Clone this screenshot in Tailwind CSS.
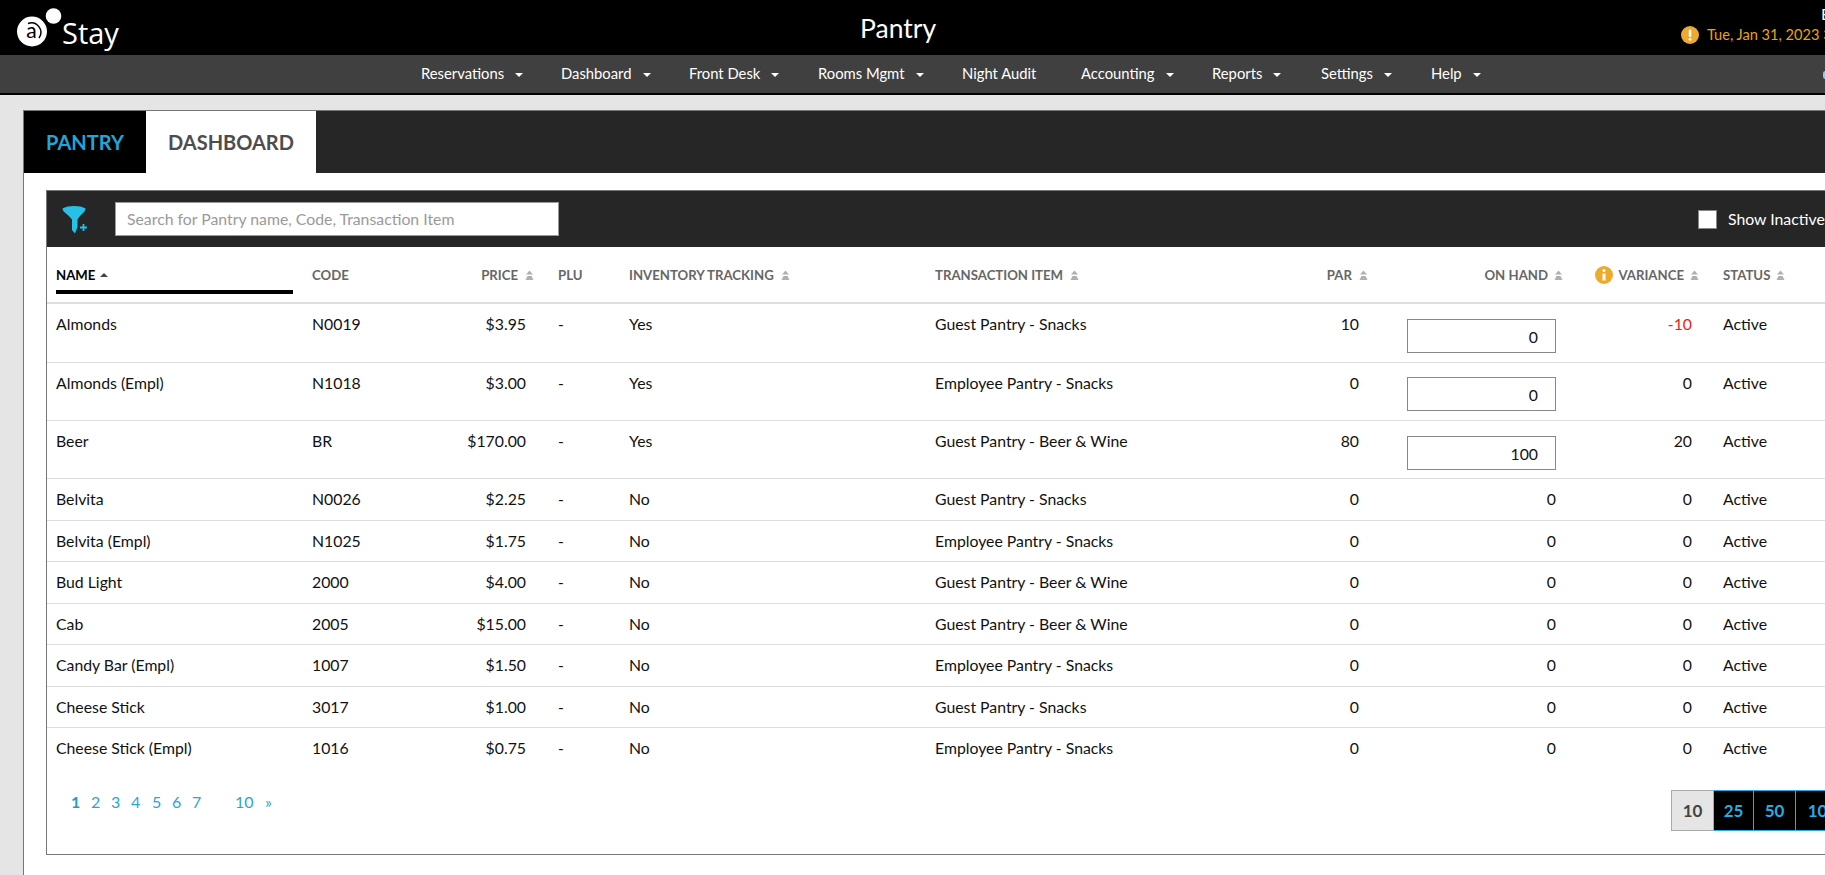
<!DOCTYPE html>
<html>
<head>
<meta charset="utf-8">
<script src="https://cdn.jsdelivr.net/npm/@tailwindcss/browser@4"></script>
</head>
<body class="w-[1825px] h-[875px] overflow-hidden bg-[#e5e5e5] font-['Lato','Noto_Sans',sans-serif] text-[15.8px] text-[#111]">
<header class="relative h-[55px] bg-black text-white flex items-start">
  <div class="flex items-start ml-[17px] mt-[5px]">
    <svg class="w-[46px] h-[45px]" viewBox="0 0 46 45">
      <circle cx="15" cy="26.500" r="15" fill="#fff"/>
      <path d="M11 18.500A9.500 9.500 0 0 1 22 33" fill="none" stroke="#000" stroke-width="1.500"/>
      <text x="14.500" y="33" text-anchor="middle" font-size="21" font-family="Lato" fill="#000">a</text>
      <circle cx="36.500" cy="11" r="7.800" fill="#fff"/>
    </svg>
    <span class="font-['Open_Sans'] text-[29px] leading-[34px] mt-[11px] -ml-[1px]">Stay</span>
  </div>
  <h1 class="absolute left-[860px] top-[9px] text-[26.5px] leading-[38px]">Pantry</h1>
  <div class="absolute left-[1681px] top-[4px] whitespace-nowrap">
    <div class="pl-[140px] text-[16px] leading-[20px]">E</div>
    <div class="flex items-center gap-[8px] text-[#eda30e] text-[14.6px] leading-[18px] mt-[2px]">
      <svg class="w-[18px] h-[18px]" viewBox="0 0 18 18"><circle cx="9" cy="9" r="9" fill="#eeaa2d"/><rect x="7.800" y="3.500" width="2.400" height="7.500" rx="1" fill="#fff"/><circle cx="9" cy="13.300" r="1.400" fill="#fff"/></svg>
      <span>Tue, Jan 31, 2023 3:00</span>
    </div>
  </div>
</header>
<nav class="relative h-[40px] bg-[#404040] border-b-2 border-black text-white text-[14.8px] flex items-center pl-[421px] pb-[2px]">
  <a class="w-[140px] flex items-center">Reservations<i class="ml-[11px] mt-[4px] border-x-[4px] border-t-[4px] border-x-transparent border-t-white"></i></a>
  <a class="w-[128px] flex items-center">Dashboard<i class="ml-[11px] mt-[4px] border-x-[4px] border-t-[4px] border-x-transparent border-t-white"></i></a>
  <a class="w-[129px] flex items-center">Front Desk<i class="ml-[11px] mt-[4px] border-x-[4px] border-t-[4px] border-x-transparent border-t-white"></i></a>
  <a class="w-[144px] flex items-center">Rooms Mgmt<i class="ml-[11px] mt-[4px] border-x-[4px] border-t-[4px] border-x-transparent border-t-white"></i></a>
  <a class="w-[119px] flex items-center">Night Audit</a>
  <a class="w-[131px] flex items-center">Accounting<i class="ml-[11px] mt-[4px] border-x-[4px] border-t-[4px] border-x-transparent border-t-white"></i></a>
  <a class="w-[109px] flex items-center">Reports<i class="ml-[11px] mt-[4px] border-x-[4px] border-t-[4px] border-x-transparent border-t-white"></i></a>
  <a class="w-[110px] flex items-center">Settings<i class="ml-[11px] mt-[4px] border-x-[4px] border-t-[4px] border-x-transparent border-t-white"></i></a>
  <a class="flex items-center">Help<i class="ml-[11px] mt-[4px] border-x-[4px] border-t-[4px] border-x-transparent border-t-white"></i></a>
  <span class="absolute left-[1823px] top-[16px] w-[5px] h-[8px] rounded-full bg-[#9cc3ee]"></span>
</nav>
<main class="ml-[23px] mt-[15px] w-[1900px] h-[800px] bg-white border border-[#777]">
  <div class="h-[62px] bg-[#262626] flex">
    <div class="w-[122px] bg-black text-[#1ea7d8] font-bold text-[20px] flex items-center justify-center">PANTRY</div>
    <div class="w-[170px] bg-white text-[#4d4d4d] font-bold text-[20px] flex items-center justify-center">DASHBOARD</div>
  </div>
  <section class="ml-[22px] mt-[17px] w-[1880px] h-[665px] border border-[#777] bg-white">
    <div class="h-[56px] bg-[#262626] flex items-center">
      <svg class="ml-[15px] w-[26px] h-[29px]" viewBox="0 0 26 29">
        <path d="M.5 3.500C6 .2 18 .2 23.500 3.500 24 6.500 17 11 15.500 14.500V22L13 28.500 10 25V14.500C8 11 0 6.500.5 3.500Z" fill="#29c0e8"/>
        <path d="M18 22.500h7M21.500 19v7" stroke="#29c0e8" stroke-width="1.800"/>
      </svg>
      <div class="ml-[27px] w-[444px] h-[34px] bg-white border border-[#999] flex items-center pl-[11px] text-[#9a9a9a] text-[15.8px]">Search for Pantry name, Code, Transaction Item</div>
      <div class="ml-[1139px] w-[19px] h-[19px] bg-white border border-[#888]"></div>
      <span class="ml-[11px] text-white text-[15.8px]">Show Inactive</span>
    </div>
    <table class="table-fixed border-collapse w-[1850px]">
      <colgroup>
        <col class="w-[256px]"><col class="w-[100px]"><col class="w-[146px]"><col class="w-[71px]"><col class="w-[306px]"><col class="w-[300px]"><col class="w-[160px]"><col class="w-[184px]"><col class="w-[144px]"><col>
      </colgroup>
      <thead>
        <tr class="h-[56px] border-b-2 border-[#ddd] text-[13.2px] font-bold text-[#666] align-top">
          <th class="pl-[9px] pt-[18px] text-left text-black font-bold">
            <span class="flex items-center gap-[5px] leading-[20px]">NAME<i class="border-x-[4px] border-b-[4px] border-x-transparent border-b-[#444]"></i></span>
            <span class="block w-[237px] h-[4px] bg-black mt-[5px]"></span>
          </th>
          <th class="pl-[9px] pt-[18px] text-left font-bold leading-[20px]">CODE</th>
          <th class="pr-[15px] pt-[18px] font-bold leading-[20px]"><span class="flex items-center justify-end gap-[7px]">PRICE<svg class="w-[9px] h-[10px]" viewBox="0 0 9 10"><path d="M4.500.5 8 4.500H1ZM2.500 6H6.500L8.500 10H.5Z" fill="#b0b0b0"/></svg></span></th>
          <th class="pl-[9px] pt-[18px] text-left font-bold leading-[20px]">PLU</th>
          <th class="pl-[9px] pt-[18px] font-bold leading-[20px]"><span class="flex items-center gap-[7px]">INVENTORY TRACKING<svg class="w-[9px] h-[10px]" viewBox="0 0 9 10"><path d="M4.500.5 8 4.500H1ZM2.500 6H6.500L8.500 10H.5Z" fill="#b0b0b0"/></svg></span></th>
          <th class="pl-[9px] pt-[18px] font-bold leading-[20px]"><span class="flex items-center gap-[7px]">TRANSACTION ITEM<svg class="w-[9px] h-[10px]" viewBox="0 0 9 10"><path d="M4.500.5 8 4.500H1ZM2.500 6H6.500L8.500 10H.5Z" fill="#b0b0b0"/></svg></span></th>
          <th class="pr-[18px] pt-[18px] font-bold leading-[20px]"><span class="flex items-center justify-end gap-[7px]">PAR<svg class="w-[9px] h-[10px]" viewBox="0 0 9 10"><path d="M4.500.5 8 4.500H1ZM2.500 6H6.500L8.500 10H.5Z" fill="#b0b0b0"/></svg></span></th>
          <th class="pr-[7px] pt-[18px] font-bold leading-[20px]"><span class="flex items-center justify-end gap-[6px]">ON HAND<svg class="w-[9px] h-[10px]" viewBox="0 0 9 10"><path d="M4.500.5 8 4.500H1ZM2.500 6H6.500L8.500 10H.5Z" fill="#b0b0b0"/></svg></span></th>
          <th class="pr-[15px] pt-[18px] font-bold leading-[20px]"><span class="flex items-center justify-end gap-[6px]"><svg class="w-[18px] h-[18px] mr-[-1px]" viewBox="0 0 18 18"><circle cx="9" cy="9" r="9" fill="#eeaa2d"/><circle cx="9" cy="4.500" r="1.500" fill="#fff"/><path d="M7.500 7.500H10.500V14.500H7.500Z" fill="#fff"/></svg>VARIANCE<svg class="w-[9px] h-[10px]" viewBox="0 0 9 10"><path d="M4.500.5 8 4.500H1ZM2.500 6H6.500L8.500 10H.5Z" fill="#b0b0b0"/></svg></span></th>
          <th class="pl-[9px] pt-[18px] font-bold leading-[20px]"><span class="flex items-center gap-[6px]">STATUS<svg class="w-[9px] h-[10px]" viewBox="0 0 9 10"><path d="M4.500.5 8 4.500H1ZM2.500 6H6.500L8.500 10H.5Z" fill="#b0b0b0"/></svg></span></th>
        </tr>
      </thead>
      <tbody class="align-top text-[15.8px] leading-[20px]">
        <tr class="h-[59px] border-b border-[#ddd]">
          <td class="pl-[9px] pt-[10px]">Almonds</td><td class="pl-[9px] pt-[10px]">N0019</td><td class="pr-[23px] pt-[10px] text-right">$3.95</td><td class="pl-[9px] pt-[10px]">-</td><td class="pl-[9px] pt-[10px]">Yes</td><td class="pl-[9px] pt-[10px]">Guest Pantry - Snacks</td><td class="pr-[27px] pt-[10px] text-right">10</td>
          <td class="pr-[14px] pt-[15px]"><div class="ml-auto w-[149px] h-[34px] border border-[#888] pr-[17px] text-right leading-[33px]">0</div></td>
          <td class="pr-[22px] pt-[10px] text-right text-[#f01818]">-10</td><td class="pl-[9px] pt-[10px]">Active</td>
        </tr>
        <tr class="h-[58px] border-b border-[#ddd]">
          <td class="pl-[9px] pt-[10px]">Almonds (Empl)</td><td class="pl-[9px] pt-[10px]">N1018</td><td class="pr-[23px] pt-[10px] text-right">$3.00</td><td class="pl-[9px] pt-[10px]">-</td><td class="pl-[9px] pt-[10px]">Yes</td><td class="pl-[9px] pt-[10px]">Employee Pantry - Snacks</td><td class="pr-[27px] pt-[10px] text-right">0</td>
          <td class="pr-[14px] pt-[14px]"><div class="ml-auto w-[149px] h-[34px] border border-[#888] pr-[17px] text-right leading-[33px]">0</div></td>
          <td class="pr-[22px] pt-[10px] text-right">0</td><td class="pl-[9px] pt-[10px]">Active</td>
        </tr>
        <tr class="h-[58px] border-b border-[#ddd]">
          <td class="pl-[9px] pt-[10px]">Beer</td><td class="pl-[9px] pt-[10px]">BR</td><td class="pr-[23px] pt-[10px] text-right">$170.00</td><td class="pl-[9px] pt-[10px]">-</td><td class="pl-[9px] pt-[10px]">Yes</td><td class="pl-[9px] pt-[10px]">Guest Pantry - Beer &amp; Wine</td><td class="pr-[27px] pt-[10px] text-right">80</td>
          <td class="pr-[14px] pt-[15px]"><div class="ml-auto w-[149px] h-[34px] border border-[#888] pr-[17px] text-right leading-[33px]">100</div></td>
          <td class="pr-[22px] pt-[10px] text-right">20</td><td class="pl-[9px] pt-[10px]">Active</td>
        </tr>
        <tr class="h-[42px] border-b border-[#ddd]">
          <td class="pl-[9px] pt-[10px]">Belvita</td><td class="pl-[9px] pt-[10px]">N0026</td><td class="pr-[23px] pt-[10px] text-right">$2.25</td><td class="pl-[9px] pt-[10px]">-</td><td class="pl-[9px] pt-[10px]">No</td><td class="pl-[9px] pt-[10px]">Guest Pantry - Snacks</td><td class="pr-[27px] pt-[10px] text-right">0</td><td class="pr-[14px] pt-[10px] text-right">0</td><td class="pr-[22px] pt-[10px] text-right">0</td><td class="pl-[9px] pt-[10px]">Active</td>
        </tr>
        <tr class="h-[41px] border-b border-[#ddd]">
          <td class="pl-[9px] pt-[10px]">Belvita (Empl)</td><td class="pl-[9px] pt-[10px]">N1025</td><td class="pr-[23px] pt-[10px] text-right">$1.75</td><td class="pl-[9px] pt-[10px]">-</td><td class="pl-[9px] pt-[10px]">No</td><td class="pl-[9px] pt-[10px]">Employee Pantry - Snacks</td><td class="pr-[27px] pt-[10px] text-right">0</td><td class="pr-[14px] pt-[10px] text-right">0</td><td class="pr-[22px] pt-[10px] text-right">0</td><td class="pl-[9px] pt-[10px]">Active</td>
        </tr>
        <tr class="h-[42px] border-b border-[#ddd]">
          <td class="pl-[9px] pt-[10px]">Bud Light</td><td class="pl-[9px] pt-[10px]">2000</td><td class="pr-[23px] pt-[10px] text-right">$4.00</td><td class="pl-[9px] pt-[10px]">-</td><td class="pl-[9px] pt-[10px]">No</td><td class="pl-[9px] pt-[10px]">Guest Pantry - Beer &amp; Wine</td><td class="pr-[27px] pt-[10px] text-right">0</td><td class="pr-[14px] pt-[10px] text-right">0</td><td class="pr-[22px] pt-[10px] text-right">0</td><td class="pl-[9px] pt-[10px]">Active</td>
        </tr>
        <tr class="h-[41px] border-b border-[#ddd]">
          <td class="pl-[9px] pt-[10px]">Cab</td><td class="pl-[9px] pt-[10px]">2005</td><td class="pr-[23px] pt-[10px] text-right">$15.00</td><td class="pl-[9px] pt-[10px]">-</td><td class="pl-[9px] pt-[10px]">No</td><td class="pl-[9px] pt-[10px]">Guest Pantry - Beer &amp; Wine</td><td class="pr-[27px] pt-[10px] text-right">0</td><td class="pr-[14px] pt-[10px] text-right">0</td><td class="pr-[22px] pt-[10px] text-right">0</td><td class="pl-[9px] pt-[10px]">Active</td>
        </tr>
        <tr class="h-[42px] border-b border-[#ddd]">
          <td class="pl-[9px] pt-[10px]">Candy Bar (Empl)</td><td class="pl-[9px] pt-[10px]">1007</td><td class="pr-[23px] pt-[10px] text-right">$1.50</td><td class="pl-[9px] pt-[10px]">-</td><td class="pl-[9px] pt-[10px]">No</td><td class="pl-[9px] pt-[10px]">Employee Pantry - Snacks</td><td class="pr-[27px] pt-[10px] text-right">0</td><td class="pr-[14px] pt-[10px] text-right">0</td><td class="pr-[22px] pt-[10px] text-right">0</td><td class="pl-[9px] pt-[10px]">Active</td>
        </tr>
        <tr class="h-[41px] border-b border-[#ddd]">
          <td class="pl-[9px] pt-[10px]">Cheese Stick</td><td class="pl-[9px] pt-[10px]">3017</td><td class="pr-[23px] pt-[10px] text-right">$1.00</td><td class="pl-[9px] pt-[10px]">-</td><td class="pl-[9px] pt-[10px]">No</td><td class="pl-[9px] pt-[10px]">Guest Pantry - Snacks</td><td class="pr-[27px] pt-[10px] text-right">0</td><td class="pr-[14px] pt-[10px] text-right">0</td><td class="pr-[22px] pt-[10px] text-right">0</td><td class="pl-[9px] pt-[10px]">Active</td>
        </tr>
        <tr class="h-[41px]">
          <td class="pl-[9px] pt-[10px]">Cheese Stick (Empl)</td><td class="pl-[9px] pt-[10px]">1016</td><td class="pr-[23px] pt-[10px] text-right">$0.75</td><td class="pl-[9px] pt-[10px]">-</td><td class="pl-[9px] pt-[10px]">No</td><td class="pl-[9px] pt-[10px]">Employee Pantry - Snacks</td><td class="pr-[27px] pt-[10px] text-right">0</td><td class="pr-[14px] pt-[10px] text-right">0</td><td class="pr-[22px] pt-[10px] text-right">0</td><td class="pl-[9px] pt-[10px]">Active</td>
        </tr>
      </tbody>
    </table>
    <div class="relative mt-[24px] flex items-start text-[#29a5d6] text-[16px] leading-[20px] pl-[24px]">
      <a class="w-[20px] font-bold text-[#1d9ccf]">1</a><a class="w-[20px]">2</a><a class="w-[20px]">3</a><a class="w-[21px]">4</a><a class="w-[20px]">5</a><a class="w-[20px]">6</a><a class="w-[43px]">7</a><a class="w-[30px]">10</a><a>»</a>
      <div class="absolute left-[1624px] top-[-2px] flex h-[41px] font-bold text-[17px]">
        <span class="w-[43px] bg-[#e5e5e5] border border-[#aaa] text-[#444] flex items-center justify-center">10</span>
        <span class="w-[40px] bg-black text-[#29abe2] border-y border-r border-[#29abe2] flex items-center justify-center">25</span>
        <span class="w-[42px] bg-black text-[#29abe2] border-y border-r border-[#29abe2] flex items-center justify-center">50</span>
        <span class="w-[54px] bg-black text-[#29abe2] border-y border-r border-[#29abe2] flex items-center justify-center">100</span>
      </div>
    </div>
  </section>
</main>
</body>
</html>
